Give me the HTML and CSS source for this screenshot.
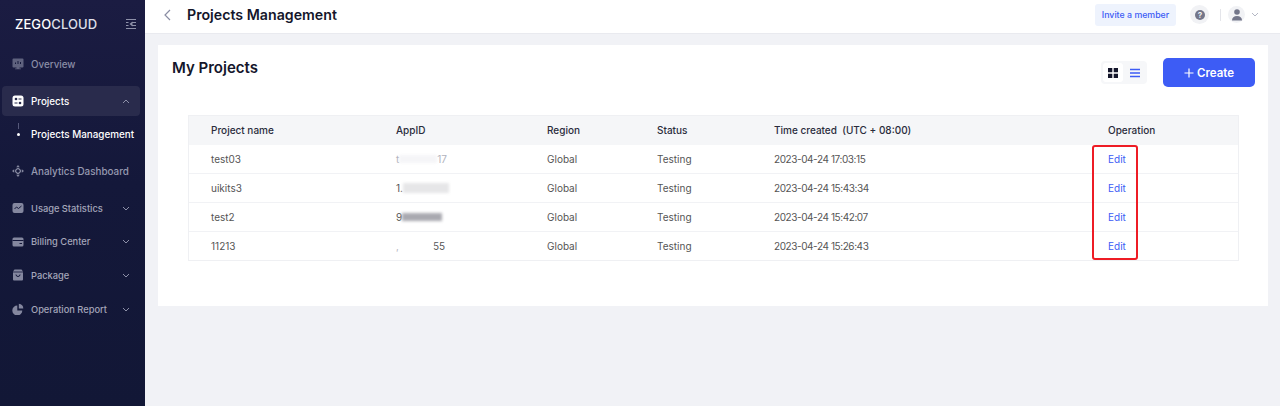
FILE: index.html
```html
<!DOCTYPE html>
<html lang="en">
<head>
<meta charset="utf-8">
<title>Projects Management</title>
<link rel="stylesheet" href="styles.css">
</head>
<body>
<div class="app">
  <aside class="sidebar">
    <div class="brand">
      <span class="logo">ZEGO<span class="logo-soft">CLOUD</span></span>
      <svg class="collapse" viewBox="0 0 10 10" width="10" height="10"><path d="M0 .5h10M0 9.500h10M6 3.500h4M6 6.500h4M0 3.500h2.500M0 6.500h2.500" stroke="#8d90a8" stroke-width="1" fill="none"/><path d="M6.500 2.500 3.500 5l3 2.500z" fill="#8d90a8"/></svg>
    </div>
    <nav class="nav">
      <a class="item dim first">
        <svg class="ico" viewBox="0 0 12 12"><path d="M.5 1.500a1 1 0 0 1 1-1h9a1 1 0 0 1 1 1v7a1 1 0 0 1-1 1H7.500v1H9v.8H3v-.8h1.500v-1h-3a1 1 0 0 1-1-1z" fill="#5f627e"/><path d="M3.500 6V4.500M6 6V3M8.500 6V4" stroke="#14183a" stroke-width="1"/></svg>
        <span>Overview</span>
      </a>
      <a class="item active">
        <svg class="ico" viewBox="0 0 12 12"><rect x=".5" y=".5" width="11" height="11" rx="2.500" fill="#fff"/><path d="M6.500 4h3M2.500 8h3" stroke="#2a2c4c" stroke-width="1.200"/><circle cx="4" cy="4" r="1.300" fill="#2a2c4c"/><circle cx="8" cy="8" r="1.300" fill="#2a2c4c"/></svg>
        <span>Projects</span>
        <svg class="chev" viewBox="0 0 8 5"><path d="M1 4l3-3 3 3" fill="none" stroke="#8d90a8" stroke-width="1"/></svg>
      </a>
      <a class="sub"><span class="dot"></span><span>Projects Management</span></a>
      <a class="item dim analytics">
        <svg class="ico" viewBox="0 0 12 12"><path d="M6 0l1.800 2.200H4.200zM6 12l1.800-2.200H4.200zM0 6l2.200-1.800v3.600zM12 6L9.800 4.200v3.600z" fill="#84879f"/><rect x="3.900" y="3.900" width="4.200" height="4.200" rx="1" transform="rotate(45 6 6)" fill="none" stroke="#84879f" stroke-width="1.200"/></svg>
        <span>Analytics Dashboard</span>
      </a>
      <a class="item grey usage">
        <svg class="ico" viewBox="0 0 12 12"><rect x=".5" y="1" width="11" height="10" rx="2" fill="#84879f"/><path d="M2.500 7l2-2 2 1.500 3-2.500" stroke="#14183a" stroke-width="1" fill="none"/></svg>
        <span>Usage Statistics</span>
        <svg class="chev" viewBox="0 0 8 5"><path d="M1 1l3 3 3-3" fill="none" stroke="#8d90a8" stroke-width="1"/></svg>
      </a>
      <a class="item grey">
        <svg class="ico" viewBox="0 0 12 12"><rect x=".5" y="1.500" width="11" height="9" rx="1.500" fill="#84879f"/><path d="M.5 4.500h11" stroke="#14183a" stroke-width="1"/><path d="M7.500 7.500h2.500" stroke="#14183a" stroke-width="1"/></svg>
        <span>Billing Center</span>
        <svg class="chev" viewBox="0 0 8 5"><path d="M1 1l3 3 3-3" fill="none" stroke="#8d90a8" stroke-width="1"/></svg>
      </a>
      <a class="item grey">
        <svg class="ico" viewBox="0 0 12 12"><path d="M2.500.5h7l1.500 2v8a1 1 0 0 1-1 1H2a1 1 0 0 1-1-1v-8z" fill="#84879f"/><path d="M1 3h10" stroke="#14183a" stroke-width=".8"/><path d="M4 5.500a2 2 0 0 0 4 0" stroke="#14183a" stroke-width="1" fill="none"/></svg>
        <span>Package</span>
        <svg class="chev" viewBox="0 0 8 5"><path d="M1 1l3 3 3-3" fill="none" stroke="#8d90a8" stroke-width="1"/></svg>
      </a>
      <a class="item grey">
        <svg class="ico" viewBox="0 0 12 12"><path d="M5.300 2.500v5h5a5 5 0 1 1-5-5z" fill="#84879f"/><path d="M6.800.8a5 5 0 0 1 4.500 4.800H6.800z" fill="#84879f"/></svg>
        <span>Operation Report</span>
        <svg class="chev" viewBox="0 0 8 5"><path d="M1 1l3 3 3-3" fill="none" stroke="#8d90a8" stroke-width="1"/></svg>
      </a>
    </nav>
  </aside>
  <div class="main">
    <header class="topbar">
      <svg class="back" viewBox="0 0 7 12"><path d="M6 1 1 6l5 5" fill="none" stroke="#8a8da3" stroke-width="1.200"/></svg>
      <h1 class="title">Projects Management</h1>
      <button class="invite">Invite a member</button>
      <span class="help"><svg viewBox="0 0 10 10" width="10" height="10"><circle cx="5" cy="5" r="5" fill="#73768a"/><text x="5" y="7.800" class="help-q">?</text></svg></span>
      <span class="sep"></span>
      <span class="avatar"><svg viewBox="0 0 10 12" width="10" height="12"><circle cx="5" cy="3" r="2.800" fill="#73768a"/><path d="M0 11.500c0-3 2-4.500 5-4.500s5 1.500 5 4.500z" fill="#73768a"/></svg></span>
      <svg class="caret" viewBox="0 0 8 5"><path d="M1 1l3 3 3-3" fill="none" stroke="#b4b7c4" stroke-width="1"/></svg>
    </header>
    <section class="card">
      <div class="card-head">
        <h2 class="card-title">My Projects</h2>
        <div class="view-toggle">
          <span class="view on"><svg viewBox="0 0 10 10" width="10" height="10"><path d="M0 0h4.300v4.300H0zM5.700 0H10v4.300H5.700zM0 5.700h4.300V10H0zM5.700 5.700H10V10H5.700z" fill="#14162b"/></svg></span>
          <span class="view"><svg viewBox="0 0 10 10" width="10" height="10"><path d="M0 1.500h10M0 5h10M0 8.500h10" stroke="#3d5cf5" stroke-width="1.300"/></svg></span>
        </div>
        <button class="create"><svg class="plus" viewBox="0 0 10 10" width="10" height="10"><path d="M5 .5v9M.5 5h9" stroke="#fff" stroke-width="1.200"/></svg>Create</button>
      </div>
      <div class="table">
        <div class="row head"><span>Project name</span><span>AppID</span><span>Region</span><span>Status</span><span>Time created&nbsp; (UTC + 08:00)</span><span>Operation</span></div>
        <div class="row"><span>test03</span><span class="appid"><span class="clear faint">t</span><span class="smear s1"></span><span class="clear faint">17</span></span><span>Global</span><span>Testing</span><span class="time">2023-04-24 17:03:15</span><a class="edit">Edit</a></div>
        <div class="row"><span>uikits3</span><span class="appid"><span class="clear">1.</span><span class="smear s2"></span></span><span>Global</span><span>Testing</span><span class="time">2023-04-24 15:43:34</span><a class="edit">Edit</a></div>
        <div class="row"><span>test2</span><span class="appid"><span class="clear">9</span><span class="smear s3"></span></span><span>Global</span><span>Testing</span><span class="time">2023-04-24 15:42:07</span><a class="edit">Edit</a></div>
        <div class="row"><span>11213</span><span class="appid"><span class="clear faint">,</span><span class="smear s4"></span><span class="clear">55</span></span><span>Global</span><span>Testing</span><span class="time">2023-04-24 15:26:43</span><a class="edit">Edit</a></div>
        <div class="highlight"></div>
      </div>
    </section>
  </div>
</div>
</body>
</html>
```

FILE: styles.css
```css
* { box-sizing: border-box; }
html, body { margin: 0; height: 100%; overflow: hidden; }
body { font-family: Inter, "Open Sans", "Liberation Sans", sans-serif; background: #f1f2f6; color: #2a2c3c; }
.app { display: flex; height: 406px; }

.sidebar { width: 145px; flex: none; background: linear-gradient(180deg, #1b1c42 0%, #14183a 45%, #121736 100%); color: #fff; }
.brand { height: 48px; display: flex; align-items: center; justify-content: space-between; padding: 0 9px 0 15px; }
.logo { font-size: 13px; font-weight: 500; letter-spacing: .1px; color: #fff; }
.logo-soft { color: #dfe0ea; }
.collapse { display: block; }
.nav { display: flex; flex-direction: column; padding: 0 5px 0 2px; }
.item { display: flex; align-items: center; height: 30px; padding: 0 10px; font-size: 9.300px; gap: 7px; font-weight: 500; margin-top: 3.700px; }
.item > span { flex: 1; white-space: nowrap; }
.item.first { margin-top: 1px; font-size: 9.800px; }
.item.dim { color: #8a8da6; }
.item.grey { color: #a4a6ba; }
.item.active { background: #292b4c; border-radius: 4px; margin-top: 7px; color: #fff; font-size: 9.800px; }
.item.analytics { margin-top: 15px; font-size: 9.900px; color: #9699b0; }
.item.usage { margin-top: 7px; }
.ico { width: 12px; height: 12px; flex: none; }
.chev { width: 8px; height: 5px; flex: none; }
.sub { position: relative; display: flex; align-items: center; gap: 11px; height: 14px; margin-top: 11px; padding-left: 15px; font-size: 9.900px; font-weight: 500; color: #fff; white-space: nowrap; }
.dot { width: 3px; height: 3px; border-radius: 50%; background: #fff; flex: none; }
.dot::before { content: ""; position: absolute; left: 15.500px; top: -4px; width: 1px; height: 6px; background: #55587a; }

.main { flex: 1; min-width: 0; }
.topbar { height: 34px; background: #fff; border-bottom: 1px solid #e9eaef; display: flex; align-items: center; padding: 0 21px 4px 19px; }
.back { width: 7px; height: 12px; flex: none; }
.title { margin: 0 auto 0 16px; font-size: 14.200px; font-weight: 600; color: #14162b; }
.invite { height: 22px; width: 81px; padding: 0; border: 0; border-radius: 3px; background: #eef3fd; color: #3d5cf5; font: 500 8.800px Inter, sans-serif; white-space: nowrap; }
.help { width: 19px; height: 19px; margin-left: 14px; border-radius: 50%; background: #f1f2f5; display: flex; align-items: center; justify-content: center; }
.help-q { font-size: 8px; font-weight: 700; text-anchor: middle; fill: #f1f2f5; }
.sep { width: 1px; height: 12px; background: #e4e5ea; margin: 0 7px 0 11px; }
.avatar { width: 17px; height: 17px; border-radius: 50%; background: #f1f2f5; display: flex; align-items: center; justify-content: center; }
.caret { width: 8px; height: 5px; margin-left: 6px; }

.card { margin: 11px 12px 0 13px; height: 261px; background: #fff; padding: 14px 13px 0 14px; }
.card-head { display: flex; align-items: flex-start; }
.card-title { margin: 0 auto 0 0; font-size: 15px; font-weight: 600; color: #14162b; line-height: 18px; }
.view-toggle { display: flex; margin-top: 2px; padding: 2px; gap: 2px; height: 23px; width: 46px; background: #f6f7f9; border-radius: 4px; }
.view { width: 20px; height: 19px; display: flex; align-items: center; justify-content: center; border-radius: 3px; }
.view.on { background: #fff; }
.create { margin: -1px 0 0 16px; width: 92px; height: 29px; border: 0; border-radius: 5px; background: #3d5cf5; color: #fff; font: 600 11.500px Inter, sans-serif; display: flex; align-items: center; justify-content: center; gap: 3px; }
.plus { display: block; }

.table { position: relative; margin: 28px 16px 0 16px; border: 1px solid #eff0f3; border-top: 0; }
.row { display: grid; grid-template-columns: 185px 151px 110px 117px 334px 1fr; align-items: center; height: 29px; border-bottom: 1px solid #f1f2f5; font-size: 10px; color: #555; white-space: nowrap; }
.row > * { padding-left: 22px; }
.row:nth-last-child(2) { border-bottom: 0; height: 28px; }
.row.head { height: 30px; padding-bottom: 2px; background: #f5f6f8; color: #2a2c3c; font-weight: 500; border-bottom: 0; border-top: 1px solid #eff0f3; }
.time { letter-spacing: -.42px; }
.edit { color: #3d5cf5; }
.appid { display: flex; align-items: center; }
.clear { flex: none; }
.faint { color: #b0b2bd; }
.smear { display: block; height: 8px; flex: none; filter: blur(1.500px); }
.s1 { width: 38px; background: #e9e9ee; opacity: .45; }
.s2 { width: 46px; height: 10px; background: #e6e6e8; }
.s3 { width: 40px; background: #a9a9b0; }
.s4 { width: 34px; background: #fff; }
.highlight { position: absolute; left: 903px; top: 30px; width: 46px; height: 115px; border: 2px solid #ee1c25; border-radius: 3px; }
```
